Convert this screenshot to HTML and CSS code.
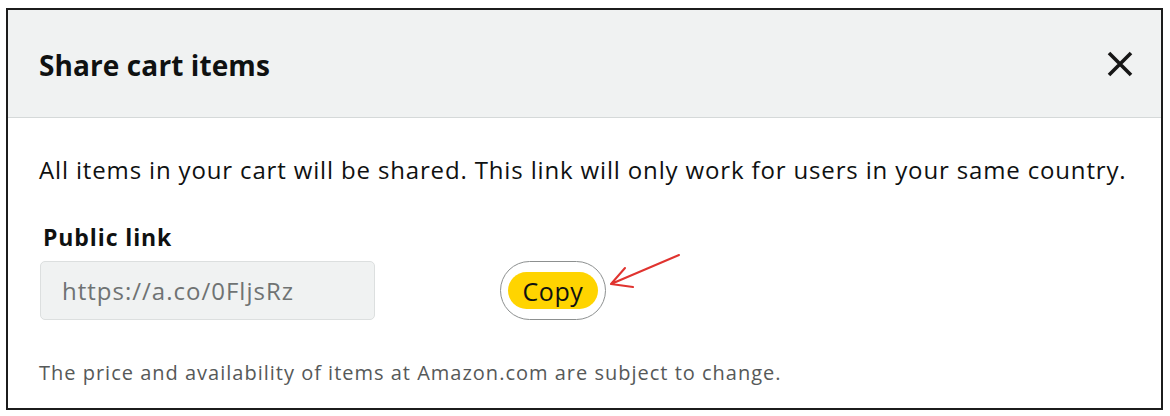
FILE: index.html
```html
<!DOCTYPE html>
<html lang="en">
<head>
<meta charset="utf-8">
<title>Share cart items</title>
<link rel="stylesheet" href="styles.css">
</head>
<body>
<div class="modal">
  <div class="modal-header">
    <h2 class="modal-title">Share cart items</h2>
    <button class="close-btn" aria-label="Close">
      <svg width="26" height="26" viewBox="0 0 26 26"><path d="M2 2 L24 24 M24 2 L2 24" stroke="#161616" stroke-width="3.6" stroke-linecap="butt"/></svg>
    </button>
  </div>
  <div class="modal-body">
    <p class="intro">All items in your cart will be shared. This link will only work for users in your same country.</p>
    <div class="field">
      <label class="field-label">Public link</label>
      <div class="link-row">
        <div class="link-input">https://a.co/0FljsRz</div>
        <div class="copy-wrap">
          <button class="copy-ring"><span class="copy-btn">Copy</span></button>
          <svg class="arrow" width="80" height="40" viewBox="0 0 80 40"><path d="M75 2 L7 31 M7 31 L21 15 M7 31 L29 34" stroke="#e0332f" stroke-width="2" fill="none" stroke-linecap="round" stroke-linejoin="round"/></svg>
        </div>
      </div>
    </div>
    <p class="note">The price and availability of items at Amazon.com are subject to change.</p>
  </div>
</div>
</body>
</html>
```
FILE: styles.css
```css
* { box-sizing: border-box; }
html, body { margin: 0; padding: 0; background: #fff; }
body { font-family: "Open Sans", "Noto Sans", sans-serif; color: #0f1111; }
.modal {
  margin: 8px 7px 0 6px;
  height: 402px;
  border: 2px solid #1c1c1c;
  display: flex;
  flex-direction: column;
}
.modal-header {
  height: 108px;
  flex: none;
  background: #f0f2f2;
  border-bottom: 1px solid #d5d9d9;
  display: flex;
  align-items: center;
  justify-content: space-between;
  padding: 0 28px 0 31px;
}
.modal-title {
  margin: 0;
  font-size: 28px;
  font-weight: 700;
  line-height: 34px;
  letter-spacing: 0.1px;
  color: #0f1111;
  padding-top: 2px;
}
.close-btn {
  border: 0;
  background: none;
  padding: 0;
  width: 26px;
  height: 26px;
  display: flex;
}
.modal-body { padding: 37px 0 0 31px; }
.intro {
  margin: 0;
  font-size: 24px;
  line-height: 30px;
  letter-spacing: 0.85px;
  color: #0f1111;
}
.field { margin-top: 38px; padding-left: 4px; }
.field-label {
  display: block;
  font-size: 23px;
  font-weight: 700;
  line-height: 28px;
  letter-spacing: 0.9px;
}
.link-row {
  margin-top: 10px;
  margin-left: -3px;
  display: flex;
  align-items: center;
  gap: 125px;
}
.link-input {
  width: 335px;
  height: 59px;
  background: #f0f2f2;
  border: 1px solid #dcdfdf;
  border-radius: 5px;
  padding-left: 21px;
  display: flex;
  align-items: center;
  font-size: 24px;
  letter-spacing: 1px;
  color: #6f7373;
}
.copy-wrap { position: relative; }
.copy-ring {
  width: 106px;
  height: 59px;
  border-radius: 30px;
  border: 1.5px solid #8d9090;
  background: #fff;
  padding: 0;
  display: flex;
  align-items: center;
  justify-content: center;
  font-family: inherit;
}
.copy-btn {
  width: 90px;
  height: 37px;
  border-radius: 19px;
  background: #ffd400;
  display: flex;
  align-items: center;
  justify-content: center;
  font-size: 25px;
  letter-spacing: 0.6px;
  color: #0f1111;
}
.arrow {
  position: absolute;
  left: 104px;
  top: -8px;
}
.note {
  margin: 40px 0 0;
  font-size: 20px;
  line-height: 26px;
  letter-spacing: 1px;
  color: #565959;
}
```
